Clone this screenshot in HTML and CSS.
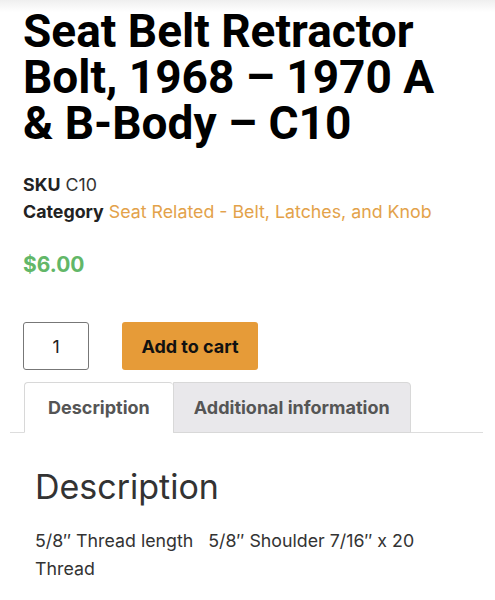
FILE: index.html
```html
<!DOCTYPE html>
<html lang="en">
<head>
<meta charset="utf-8">
<title>Seat Belt Retractor Bolt</title>
<link rel="stylesheet" href="styles.css">
</head>
<body>
<div class="page">
  <div class="summary">
    <h1 class="title">Seat Belt Retractor Bolt, 1968 – 1970 A &amp; B-Body – C10</h1>
    <div class="meta">
      <div class="meta-row"><span class="label">SKU</span> C10</div>
      <div class="meta-row"><span class="label">Category</span> <a class="link" href="#">Seat Related - Belt, Latches, and Knob</a></div>
    </div>
    <p class="price">$6.00</p>
    <form class="cart">
      <div class="qty">1</div>
      <button class="add" type="button">Add to cart</button>
    </form>
  </div>
  <div class="tabs">
    <div class="tab active">Description</div>
    <div class="tab extra">Additional information</div>
  </div>
  <div class="panel">
    <h2 class="panel-title">Description</h2>
    <p class="panel-text">5/8″ Thread length &nbsp; 5/8″ Shoulder 7/16″ x 20 Thread</p>
  </div>
</div>
</body>
</html>
```

FILE: styles.css
```css
html, body {
  margin: 0;
  padding: 0;
  background: #fff;
}
body {
  font-family: Inter, "Liberation Sans", sans-serif;
  color: #333;
  background: linear-gradient(#efefef 0, #fff 12px) no-repeat;
}
.page {
  width: 495px;
  padding-top: 8px;
}
.summary {
  padding: 0 23px;
}
.title {
  margin: 0;
  max-width: 430px;
  font-family: Roboto, "Liberation Sans", sans-serif;
  font-weight: 700;
  font-size: 46px;
  line-height: 46px;
  color: #000;
}
.meta {
  margin-top: 25px;
  font-size: 17.8px;
  line-height: 27px;
  color: #333;
}
.label {
  font-weight: 700;
  color: #222;
}
.link {
  color: #e3a24a;
  text-decoration: none;
}
.price {
  margin: 25px 0 0;
  font-size: 21px;
  line-height: 30px;
  font-weight: 700;
  color: #62b768;
}
.cart {
  margin-top: 42px;
  display: flex;
  gap: 33px;
}
.qty {
  box-sizing: border-box;
  width: 66px;
  height: 48px;
  border: 1px solid #777;
  border-radius: 3px;
  display: flex;
  align-items: center;
  justify-content: center;
  font-size: 17.8px;
  color: #222;
}
.add {
  box-sizing: border-box;
  width: 136px;
  height: 48px;
  border: 0;
  border-radius: 3px;
  background: #e69b38;
  color: #111;
  font-family: Inter, "Liberation Sans", sans-serif;
  font-weight: 700;
  font-size: 18px;
}
.tabs {
  margin: 12px 12px 0 10px;
  padding-left: 14px;
  display: flex;
  border-bottom: 1px solid #ddd;
}
.tab {
  box-sizing: border-box;
  height: 51px;
  margin-bottom: -1px;
  padding: 0 23px;
  display: flex;
  align-items: center;
  border: 1px solid #d8d8d8;
  border-radius: 4px 4px 0 0;
  background: #e9e8eb;
  font-size: 18px;
  font-weight: 700;
  color: #555;
}
.tab.active {
  background: #fff;
  border-bottom-color: #fff;
  border-right: 0;
}
.tab.extra {
  padding: 0 20px;
  border-radius: 0 4px 0 0;
}
.panel {
  padding: 0 35px;
}
.panel-title {
  margin: 33px 0 0;
  font-size: 34px;
  line-height: 41px;
  font-weight: 400;
  color: #333;
}
.panel-text {
  margin: 20px 0 0;
  font-size: 17.8px;
  line-height: 28px;
  color: #333;
  max-width: 430px;
}
```
